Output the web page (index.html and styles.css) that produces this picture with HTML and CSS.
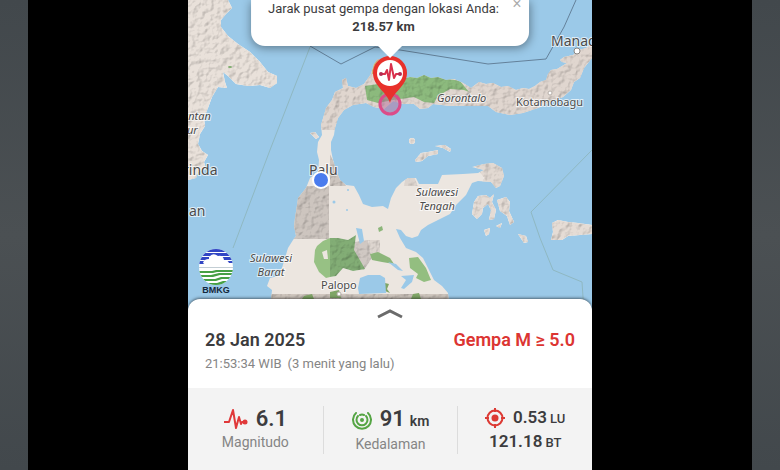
FILE: index.html
```html
<!DOCTYPE html>
<html lang="id">
<head>
  <meta charset="UTF-8">
  <meta name="viewport" content="width=device-width, initial-scale=1.0">
  <title>Info Gempa</title>
  <link rel="stylesheet" href="styles.css">
</head>
<body>

  <div class="stage">
    <main class="app">

      <!-- Map -->
      <section class="map">
        <svg class="map-canvas" viewBox="0 0 404 312" preserveAspectRatio="xMidYMin slice" role="img" aria-label="Peta Sulawesi">
          <defs>
            <filter id="relief" x="0" y="0" width="100%" height="100%" color-interpolation-filters="sRGB">
              <feTurbulence type="fractalNoise" baseFrequency="0.16" numOctaves="3" seed="4" result="noise"/>
              <feDiffuseLighting in="noise" surfaceScale="0.8" diffuseConstant="1.16" lighting-color="#ffffff" result="light">
                <feDistantLight azimuth="225" elevation="58"/>
              </feDiffuseLighting>
              <feComposite in="light" in2="SourceGraphic" operator="in" result="shade"/>
              <feBlend in="shade" in2="SourceGraphic" mode="multiply"/>
              <feGaussianBlur stdDeviation="0.6"/>
            </filter>
            <clipPath id="land">
              <path d="M83 300L84 290L79 286L82 278L90 276L94 268L97 258L100 248L105 240L108 236L106 226L107 218L109 205L110 198L118 188L122 178L130 172L131 160L129 152L130 142L134 135L133 125L136 115L138 108L144 100L147 92L155 88L154 80L158 78L160 86L168 88L176 84L183 74L186 64L190 59L204 60L212 80L222 77L229 78L236 75L243 78L250 77L258 80L266 79L275 83L283 88L291 82L298 84L305 83L313 87L320 86L328 90L335 88L341 89L347 86L352 82L358 80L360 74L363 70L369 69L374 66L379 63L374 62L372 60L376 57L385 55L391 50L398 48L404 44L404 58L396 68L392 78L386 82L383 90L375 97L362 102L350 108L335 113L322 115L308 112L300 106L280 106L262 106L245 104L240 108L232 109L226 104L215 104L205 101L196 109L186 107L178 103L165 105L156 110L150 118L147 128L146 135L143 142L143 150L145 160L148 170L152 180L158 185L166 186L171 195L175 204L184 207L195 206L200 209L203 198L208 188L214 182L220 178L228 178L231 184L250 184L254 175L275 174L290 173L296 170L284 167L296 164L305 163L314 168L316 176L312 186L308 188L303 182L290 181L284 183L278 195L268 205L262 214L250 220L240 225L233 230L230 236L224 238L218 236L213 230L208 229L212 238L218 248L228 252L235 258L240 268L246 280L254 286L260 293L262 312L83 312Z"/>
            </clipPath>
          </defs>

          <rect width="404" height="312" fill="#9bc9e8"/>
          <path class="route" d="M122 47L82 150L45 248M404 150L343 212L352 238L365 270L394 282L396 312"/>
          <path class="border" d="M122 46L153 64L187 47L212 50L300 64L358 59L376 27L388 0"/>

          <!-- Kalimantan -->
          <g filter="url(#relief)" fill="#e9e1da">
            <path d="M0 0L40 0L44 8L38 14L33 20L33 27L40 36L50 44L62 52L72 62L80 72L89 76L89 83L82 88L72 85L60 86L48 84L40 76L35 72L37 82L39 88L30 87L24 97L20 108L16 118L17 126L12 134L10 144L14 151L20 155L16 162L18 169L10 172L8 178L0 180Z"/>
          </g>
          <ellipse cx="42" cy="67" rx="2" ry="1" fill="#7dac6c"/>

          <!-- Sulawesi -->
          <g clip-path="url(#land)">
            <rect width="404" height="312" fill="#ece6e0"/>
            <g filter="url(#relief)">
              <path d="M128 130L128 40H404V130Z" fill="#e0d6cf"/>
              <path d="M104 186H141V239H104ZM142 154L158 186H142Z" fill="#cdc5bf"/>
              <path d="M282 160H320V192H290L296 178Z" fill="#e2d9d2"/>
              <path d="M166 242L180 240L184 258L176 270L166 268Z" fill="#d0c8c3"/>
              <path d="M180 240H192V253H182ZM217 178L225 174L230 186H216Z" fill="#ddd5cf"/>
              <path d="M83 294H262V312H83Z" fill="#cfc6be"/>
              <path d="M177 86L190 84L210 79L222 75H240L255 78L272 81L281 92L276 90L262 89L250 96L246 103L236 102L226 97L205 100L190 103L179 100Z" fill="#8cba7d"/>
              <path d="M142 238L150 238L160 240L168 235L166 250L173 262L177 269L165 271L155 268L148 276L142 277Z" fill="#82ad75"/>
            </g>
            <path d="M183 64L190 59L187 74L184 74Z" fill="#c9ad74"/>
            <path d="M142 238V277L138 278L131 272L126 262L127 250L129 246L135 241Z" fill="#97c184"/>
            <path d="M134 252L139 250L140 259L136 259Z" fill="#ece6e0"/>
            <path d="M182 254L190 252L202 258L206 264L194 262L184 260Z" fill="#8cb67a"/>
            <path d="M190 228L194 226L195 230L191 232Z" fill="#8cb67a"/>
            <path d="M221 258L230 257L238 268L243 280L236 282L228 278L230 274L222 268Z" fill="#93be80"/>
            <path d="M116 296L124 294L126 299H114ZM142 292L151 290L153 298H142ZM197 283L201 284L199 289L202 293L197 291ZM225 294L231 293L233 299H223Z" fill="#7fa566"/>
            <path d="M171 294L170 288L172 278L180 275H192L197 278L198 293Z" fill="#9bc9e8"/>
            <path d="M213 276L226 275L224 282L216 289L213 288L218 280ZM168 228L174 229L176 241L172 244ZM200 262L208 264L215 271L210 270Z" fill="#9bc9e8"/>
            <circle cx="146" cy="202" r="1.5" fill="#9bc9e8"/>
            <circle cx="159" cy="210" r="1" fill="#9bc9e8"/>
            <circle cx="160" cy="190" r="1" fill="#9bc9e8"/>
          </g>

          <!-- Small islands -->
          <g filter="url(#relief)" fill="#e5dcd5">
            <path d="M122 133L127 132L131 137L128 139Z"/>
            <path d="M227 160L233 153L240 152L250 150L250 154L240 156L234 161L228 162Z"/>
            <path d="M247 146L257 145L263 149L262 152L255 148Z"/>
            <circle cx="224" cy="141" r="3"/>
            <path d="M286 202L290 196L298 195L302 198L306 194L304 202L308 210L306 219L301 220L303 210L300 204L295 208L294 214L289 219L284 214Z"/>
            <path d="M309 200L318 197L322 202L321 211L326 222L322 225L319 216L312 211Z"/>
            <path d="M296 230L302 228L301 234L298 236Z"/>
            <path d="M308 226L314 223L312 228Z"/>
            <path d="M330 234L338 236L340 242L336 243Z"/>
            <path d="M364 223L370 220L380 222L390 223L404 225V234L392 235L380 236L374 240L363 240L365 232Z"/>
          </g>

          <!-- Place names -->
          <g class="place">
            <text x="-5" y="175" class="city">rinda</text>
            <text x="1" y="216" class="city">an</text>
            <text x="121" y="175" class="city">Palu</text>
            <text x="363" y="46" class="city">Manado</text>
            <text x="328" y="106" class="town">Kotamobagu</text>
            <text x="133" y="289" class="town">Palopo</text>
            <text x="-6" y="120" class="region">antan</text>
            <text x="-1" y="134" class="region">ur</text>
            <text x="249" y="102" class="region">Gorontalo</text>
            <text y="196" class="region middle"><tspan x="249">Sulawesi</tspan><tspan x="249" dy="14">Tengah</tspan></text>
            <text y="262" class="region middle"><tspan x="83">Sulawesi</tspan><tspan x="83" dy="14">Barat</tspan></text>
          </g>
          <g fill="#fff" stroke="#8b8580">
            <circle cx="389" cy="51" r="3"/>
            <circle cx="362" cy="93" r="2" stroke="#b5aea8"/>
            <circle cx="151" cy="294" r="2" stroke="#b5aea8"/>
          </g>

          <!-- User location -->
          <circle cx="133" cy="180" r="9" fill="#fff"/>
          <circle cx="133" cy="180" r="7" fill="#4a7cee"/>

          <!-- Epicentre and pin -->
          <circle cx="202" cy="104" r="10" fill="#b56f9a" fill-opacity="0.5" stroke="#dc4c88" stroke-width="3"/>
          <path d="M202 103C199 92 185 86 185 73A17 17 0 0 1 219 73C219 86 205 92 202 103Z" fill="#e8312b"/>
          <circle cx="202" cy="73" r="13" fill="#fff"/>
          <path d="M193 74H197L199 70L201 80L203 64L206 78L208 74H212" fill="none" stroke="#d9304c" stroke-width="2" stroke-linejoin="round"/>
          <circle cx="193" cy="74" r="2" fill="#b52b52"/>
          <circle cx="212" cy="74" r="2" fill="#b52b52"/>
        </svg>

        <div class="popup">
          <p class="popup-text">Jarak pusat gempa dengan lokasi Anda:<br><strong>218.57 km</strong></p>
          <button class="popup-close" type="button" aria-label="Tutup">×</button>
        </div>

        <div class="logo">
          <svg class="logo-mark" viewBox="0 0 34 36" aria-hidden="true">
            <clipPath id="disc"><ellipse cx="17" cy="18" rx="17" ry="18"/></clipPath>
            <g clip-path="url(#disc)">
              <rect width="34" height="36" fill="#fff"/>
              <path d="M0 0H34V3H0ZM0 4H34V7H0ZM0 8H10Q14 5 18 8H34V11H0ZM0 12H5L8 10V12L4 15H0ZM23 12H34V14H27Z" fill="#3246c4"/>
              <path d="M10 8Q14 3 19 7Q24 6 25 11Q29 11 30 14H4Q5 10 10 10Z" fill="#fff"/>
              <path d="M0 18.500H34" stroke="#c3ced4"/>
              <path d="M0 22H13L17 21H34V23H18L14 24H0ZM0 26H12L20 24H34V26H21L14 28H0ZM0 30H16L22 28H34V30H23L17 32H0ZM4 34H18L24 32H34V36H4Z" fill="#46a044"/>
            </g>
          </svg>
          <span class="logo-name">BMKG</span>
        </div>
      </section>

      <!-- Detail sheet -->
      <section class="sheet">
        <button class="handle" type="button" aria-label="Buka detail">
          <svg width="28" height="10" viewBox="0 0 28 10" aria-hidden="true">
            <path d="M2 8L14 2L26 8" fill="none" stroke="#6b6b6b" stroke-width="3"/>
          </svg>
        </button>

        <header class="summary">
          <div class="summary-row">
            <h1>28 Jan 2025</h1>
            <strong class="category">Gempa M ≥ 5.0</strong>
          </div>
          <p class="time"><span>21:53:34 WIB</span> <span>(3 menit yang lalu)</span></p>
        </header>

        <div class="stats">
          <div class="stat">
            <div class="value">
              <svg width="24" height="22" viewBox="0 0 24 22" aria-hidden="true">
                <path d="M0 14H5L9 2L12 20L15 9L17 16L18 14H21" fill="none" stroke="#e0393a" stroke-width="2" stroke-linejoin="round"/>
                <circle cx="21" cy="14" r="2.500" fill="#e0393a"/>
              </svg>
              <span>6.1</span>
            </div>
            <div class="label">Magnitudo</div>
          </div>
          <div class="stat">
            <div class="value">
              <svg width="20" height="22" viewBox="0 0 20 22" aria-hidden="true">
                <g fill="none" stroke="#55a544" stroke-width="2" stroke-linecap="round">
                  <path d="M4 4A9 9 0 1 0 16 4"/>
                  <path d="M6 7A5.500 5.500 0 1 0 14 7"/>
                  <path d="M8 6Q10 5 12 6"/>
                </g>
                <circle cx="10" cy="11" r="2" fill="#55a544"/>
              </svg>
              <span>91<small>km</small></span>
            </div>
            <div class="label">Kedalaman</div>
          </div>
          <div class="stat">
            <div class="value coord">
              <svg width="20" height="22" viewBox="0 0 20 22" aria-hidden="true">
                <circle cx="10" cy="11" r="7.500" fill="none" stroke="#dc3a34" stroke-width="2"/>
                <circle cx="10" cy="11" r="3.500" fill="#dc3a34"/>
                <path d="M10 1V5M10 17V21M0 11H4M16 11H20" stroke="#dc3a34" stroke-width="2"/>
              </svg>
              <span>0.53<small>LU</small></span>
            </div>
            <div class="coord">121.18<small>BT</small></div>
          </div>
        </div>
      </section>

    </main>
  </div>

</body>
</html>
```
FILE: styles.css
```css
* {
  box-sizing: border-box;
}

body {
  margin: 0;
  padding: 0 28px;
  min-height: 100vh;
  font-family: Roboto, 'Liberation Sans', sans-serif;
  color: #3c3c3e;
  background: linear-gradient(#42484c, #4b5053 50%, #42484c);
}

h1,
p {
  margin: 0;
}

button {
  padding: 0;
  border: 0;
  background: none;
  cursor: pointer;
}

.stage {
  display: grid;
  grid-template-columns: 160px minmax(0, 1fr) 160px;
  min-height: 100vh;
  background: #000;
}

.app {
  grid-column: 2;
  display: flex;
  flex-direction: column;
  overflow: hidden;
}

/* Map */
.map {
  position: relative;
  flex: 1;
  overflow: hidden;
  background: #9bc9e8;
}

.map-canvas {
  position: absolute;
  width: 100%;
  height: 100%;
}

.route,
.border {
  fill: none;
  stroke: #8fb8c2;
}

.border {
  stroke: #64819a;
}

.place {
  font-family: 'Noto Sans', sans-serif;
  fill: #4b4b4b;
  stroke: rgba(255, 255, 255, 0.7);
  stroke-width: 2px;
  paint-order: stroke;
}

.city {
  font-size: 14px;
}

.town {
  font-size: 11px;
}

.region {
  font-size: 11px;
  font-style: italic;
}

.middle {
  text-anchor: middle;
}

.popup {
  position: absolute;
  top: 0;
  left: 50%;
  transform: translateX(-50%);
  display: flex;
  padding: 0 4px 10px 17px;
  border-radius: 0 0 14px 14px;
  background: #fff;
  white-space: nowrap;
  box-shadow: 0 2px 10px rgba(0, 0, 0, 0.4);
}

.popup::after {
  content: '';
  position: absolute;
  top: 100%;
  left: 50%;
  transform: translateX(-50%);
  border: solid transparent;
  border-width: 12px 12px 0;
  border-top-color: #fff;
}

.popup-text {
  font-size: 13px;
  line-height: 18px;
  text-align: center;
}

.popup-close {
  width: 16px;
  height: 8px;
  margin-left: 10px;
  font-size: 16px;
  line-height: 8px;
  color: #aaa;
}

.logo {
  position: absolute;
  left: 11px;
  bottom: 16px;
  display: flex;
  flex-direction: column;
  align-items: center;
}

.logo-mark {
  width: 34px;
  height: 36px;
}

.logo-name {
  font-family: 'Liberation Sans', sans-serif;
  font-size: 9px;
  font-weight: bold;
  line-height: 10px;
  color: #14283c;
}

/* Detail sheet */
.sheet {
  position: relative;
  margin-top: -12px;
  border-radius: 12px 12px 0 0;
  overflow: hidden;
  background: #fff;
  box-shadow: 0 -1px 3px rgba(0, 0, 0, 0.5);
}

.handle {
  display: flex;
  justify-content: center;
  width: 100%;
  padding: 10px 0 8px;
}

.summary {
  padding: 0 17px 14px;
}

.summary-row {
  display: flex;
  justify-content: space-between;
  font-size: 18px;
  line-height: 26px;
}

.summary-row h1,
.category {
  font-size: inherit;
  font-weight: 600;
}

.category {
  color: #dc3532;
}

.time {
  display: flex;
  gap: 6px;
  font-size: 13px;
  line-height: 21px;
  color: #858585;
}

.stats {
  display: grid;
  grid-template-columns: repeat(3, 1fr);
  padding: 18px 0 16px;
  background: #f3f3f3;
}

.stat {
  display: flex;
  flex-direction: column;
  align-items: center;
  height: 48px;
}

.stat + .stat {
  border-left: 1px solid #dcdcdc;
}

.value {
  display: flex;
  align-items: center;
  gap: 8px;
  font-size: 22px;
  font-weight: 600;
  line-height: 26px;
}

.value small {
  margin-left: 5px;
  font-size: 14px;
}

.label {
  font-size: 14px;
  line-height: 20px;
  color: #858585;
}

.coord {
  font-size: 17px;
  font-weight: 600;
  line-height: 22px;
}

.coord small {
  margin-left: 3px;
  font-size: 13px;
  font-weight: 500;
}
```
